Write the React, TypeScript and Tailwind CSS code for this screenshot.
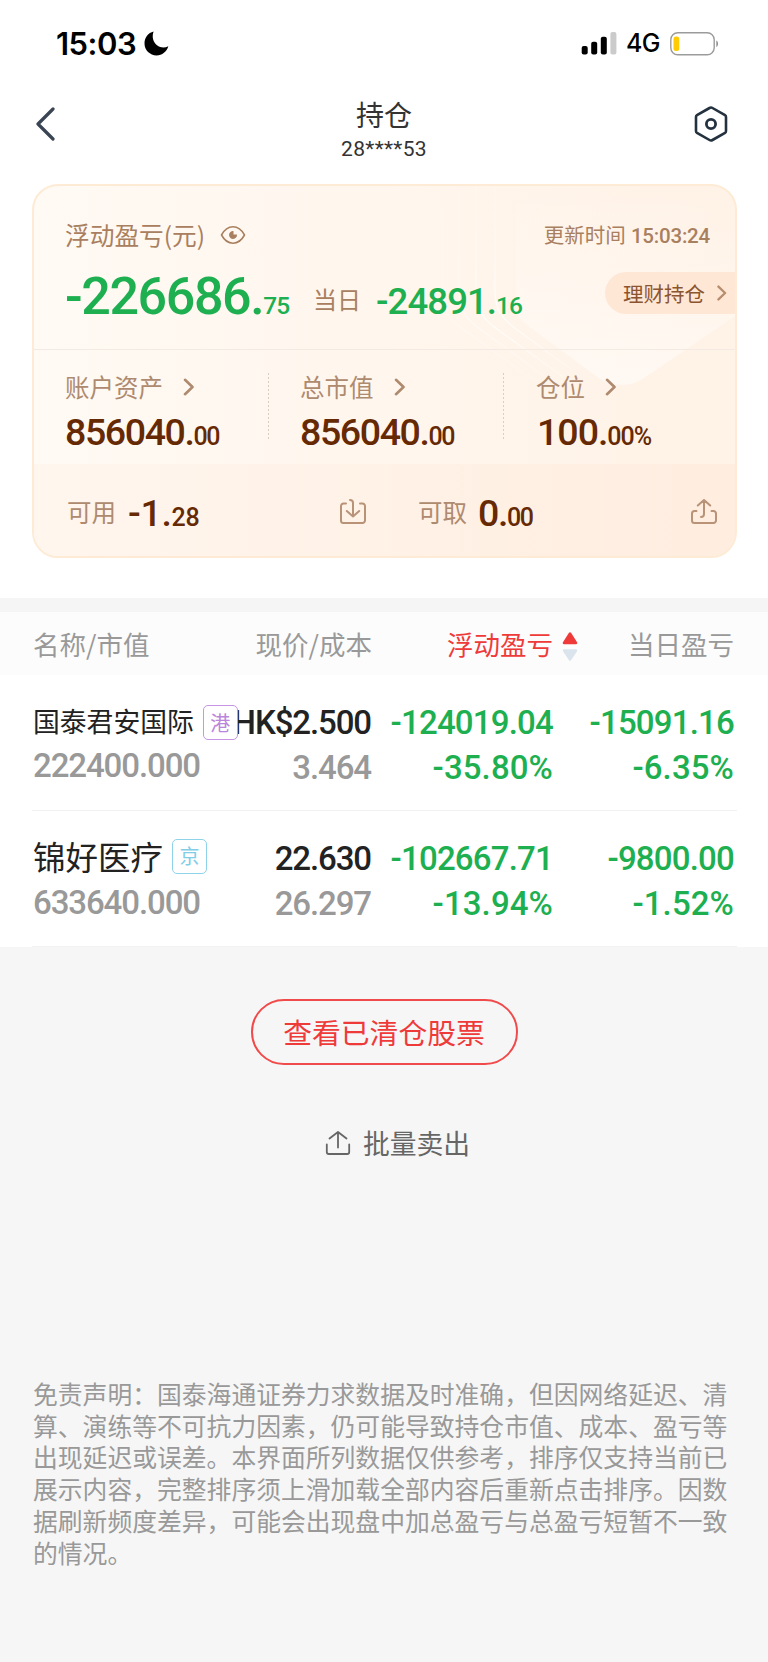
import type { ReactNode } from 'react';
import clsx from 'clsx';

const CJK = "font-['Noto_Sans_CJK_SC',sans-serif]";
const NUM = "font-['Roboto','Noto_Sans_CJK_SC',sans-serif]";

interface Holding {
  name: string;
  nameClass: string;
  market: string;
  marketClass: string;
  marketValue: string;
  marketValueClass: string;
  price: string;
  cost: string;
  profit: string;
  profitRate: string;
  daily: string;
  dailyRate: string;
}

const holdings: Holding[] = [
  {
    name: '国泰君安国际',
    nameClass: 'pb-[4px] text-[26.8px]',
    market: '港',
    marketClass: 'border-[#c795e3] text-[#bb85dc]',
    marketValue: '222400.000',
    marketValueClass: '-mt-[2px]',
    price: 'HK$2.500',
    cost: '3.464',
    profit: '-124019.04',
    profitRate: '-35.80%',
    daily: '-15091.16',
    dailyRate: '-6.35%',
  },
  {
    name: '锦好医疗',
    nameClass: 'pb-[6px] text-[32.5px]',
    market: '京',
    marketClass: 'mb-[5px] border-[#8fd3ea] text-[#82cde6]',
    marketValue: '633640.000',
    marketValueClass: '-mt-px',
    price: '22.630',
    cost: '26.297',
    profit: '-102667.71',
    profitRate: '-13.94%',
    daily: '-9800.00',
    dailyRate: '-1.52%',
  },
];

function StatusBar() {
  return (
    <div className="flex h-[87px] items-center pr-[48px] pl-[56px] text-black">
      <span className="font-['Inter',sans-serif] text-[31px] leading-none font-semibold tracking-[-0.5px]">15:03</span>
      <svg className="ml-[8px]" width="25" height="25" viewBox="0 0 25 25">
        <path d="M9.6 0.6C7.6 6 9.2 11.2 13 14.2C16.4 16.8 20.6 17 24.3 15.2C22.8 20.6 18.2 24.4 12.6 24.4C5.9 24.4 0.5 19.1 0.5 12.5C0.5 6.8 4.2 1.9 9.6 0.6Z" fill="#000" />
      </svg>
      <svg className="ml-auto" width="36" height="23" viewBox="0 0 36 23">
        <rect x="0.7" y="14" width="6" height="8.5" rx="2" fill="#000" />
        <rect x="10.2" y="9.7" width="6" height="12.8" rx="2" fill="#000" />
        <rect x="19.8" y="4.7" width="6" height="17.8" rx="2" fill="#000" />
        <rect x="29.4" y="0" width="6" height="22.5" rx="2" fill="#cbcbcb" />
      </svg>
      <span className="ml-[9px] font-['Inter',sans-serif] text-[25px] leading-none font-medium tracking-[-0.5px]">4G</span>
      <svg className="ml-[10px]" width="50" height="24" viewBox="0 0 50 24">
        <rect x="0.8" y="0.8" width="43.4" height="22" rx="7" fill="none" stroke="#9b9b9b" strokeWidth="1.4" />
        <rect x="3.5" y="4.5" width="5.8" height="14.5" rx="2.5" fill="#fecb05" />
        <path d="M46.3 8.5C48.6 9.5 48.6 14 46.3 15Z" fill="#8f8f8f" />
      </svg>
    </div>
  );
}

function Header() {
  return (
    <div className="flex h-[97px] items-start justify-between pt-px pr-[39px] pl-[35px]">
      <svg className="mt-[19px]" width="40" height="34" viewBox="0 0 40 34">
        <path d="M18 2L3 17L18 32" fill="none" stroke="#3a4553" strokeWidth="3.2" strokeLinecap="round" strokeLinejoin="round" />
      </svg>
      <div className="flex flex-col items-center text-[#333]">
        <h1 className={clsx(CJK, 'mt-[9px] text-[28px] leading-[34px] font-normal')}>持仓</h1>
        <span className={clsx(NUM, 'mt-[6px] text-[21px] leading-[24px] tracking-[0.3px]')}>28****53</span>
      </div>
      <svg className="mt-[17px]" width="36" height="38" viewBox="0 0 36 38">
        <path d="M18 2.5C18.6 2.5 19 2.7 19.5 3L32 10.2C32.8 10.7 33 11.2 33 12V26C33 26.8 32.8 27.3 32 27.8L19.5 35C18.5 35.6 17.5 35.6 16.5 35L4 27.8C3.2 27.3 3 26.8 3 26V12C3 11.2 3.2 10.7 4 10.2L16.5 3C17 2.7 17.4 2.5 18 2.5Z" fill="none" stroke="#243240" strokeWidth="2.6" />
        <circle cx="18" cy="19" r="4.6" fill="none" stroke="#243240" strokeWidth="2.8" />
      </svg>
    </div>
  );
}

function Chevron({ className }: { className?: string }) {
  return (
    <svg className={className} width="12" height="18" viewBox="0 0 12 18">
      <path d="M2 1.8L9.5 9L2 16.2" fill="none" stroke="currentColor" strokeWidth="2.6" strokeLinecap="round" strokeLinejoin="round" />
    </svg>
  );
}

interface AmountProps {
  whole: string;
  fraction: string;
  tracking?: string;
  className?: string;
}

function Amount({ whole, fraction, tracking = 'tracking-[-1.4px]', className }: AmountProps) {
  return (
    <div className={clsx(NUM, 'font-medium whitespace-nowrap text-[#652903]', tracking, className)}>
      <span className="text-[37.5px] leading-[40px]">{whole}</span>
      <span className="text-[25px] leading-[40px]">{fraction}</span>
    </div>
  );
}

function AssetCell({ label, children }: { label: string; children: ReactNode }) {
  return (
    <div className="flex flex-col gap-[8px] pt-[20px]">
      <div className="flex items-center text-[#ae8a6f]">
        <span className={clsx(CJK, 'text-[24.5px] leading-[34px]')}>{label}</span>
        <Chevron className="ml-[20px]" />
      </div>
      {children}
    </div>
  );
}

function DottedDivider() {
  return <div className="mt-[23px] h-[67px] w-px bg-[repeating-linear-gradient(to_bottom,#d9cec4_0_2px,transparent_2px_4px)]" />;
}

function AssetCard() {
  return (
    <section className="relative mr-[31px] ml-[32px] h-[374px] overflow-hidden rounded-[26px] border-2 border-[#feebd6] bg-linear-to-r from-[#fffaf4] to-[#fff2e6]">
      {/* 背景装饰 */}
      <svg className="absolute top-0 left-0" width="703" height="372" viewBox="0 0 703 372">
        <defs>
          <linearGradient id="shield" x1="0" y1="0" x2="0" y2="1">
            <stop offset="0" stopColor="#fff" stopOpacity="0" />
            <stop offset="1" stopColor="#fff" stopOpacity="0.5" />
          </linearGradient>
          <linearGradient id="trail" x1="0" y1="0" x2="0" y2="1">
            <stop offset="0" stopColor="#fff" stopOpacity="0.1" />
            <stop offset="0.7" stopColor="#fff" stopOpacity="0.9" />
            <stop offset="1" stopColor="#fff" stopOpacity="0.2" />
          </linearGradient>
        </defs>
        <path d="M482 0H703V129L613 190C598 202 577 202 562 190L494 140C486 134 482 128 482 120Z" fill="url(#shield)" />
        <g fill="none" stroke="url(#trail)" strokeWidth="1.2">
          <path d="M461 0V104C461 124 468 133 482 143L538 184" />
          <path d="M442 0V104C442 124 449 133 463 143L528 190" />
          <path d="M425 0V104C425 124 432 133 446 143L518 196" opacity="0.6" />
          <path d="M408 0V104C408 124 415 133 429 143L508 200" opacity="0.4" />
        </g>
      </svg>

      <div className="relative flex h-[370px] flex-col">
        <div className="h-[164px] border-b border-[#f3ebe3]">
          <div className="flex h-[66px] items-center pt-[32px] pr-[25px] pl-[31px] text-[#a9805f]">
            <span className={clsx(CJK, '-mt-[3px] text-[24.7px] leading-[34px]')}>浮动盈亏(元)</span>
            <svg className="ml-[15px]" width="26" height="20" viewBox="0 0 26 20">
              <path d="M1.5 10C4.5 4.5 8.5 1.8 13 1.8S21.5 4.5 24.5 10C21.5 15.5 17.5 18.2 13 18.2S4.5 15.5 1.5 10Z" fill="none" stroke="currentColor" strokeWidth="1.6" strokeLinejoin="round" />
              <path d="M13.5 6A4 4 0 1 0 17 9.5H13.5Z" fill="currentColor" />
            </svg>
            <span className={clsx(NUM, 'ml-auto pt-[2px] text-[20.5px] leading-[32px]')}>
              更新时间 <span className="font-medium tracking-[-0.2px]">15:03:24</span>
            </span>
          </div>
          <div className="flex items-start">
            <div className={clsx(NUM, 'flex items-baseline pl-[31px] font-medium whitespace-nowrap text-[#1daf50]')}>
              <span className="text-[52px] leading-[89px] tracking-[-1.4px]">-226686.</span>
              <span className="text-[24.5px] tracking-[-1px]">75</span>
              <span className={clsx(CJK, 'ml-[24px] -translate-y-[5px] text-[24px] font-normal text-[#a9805f]')}>当日</span>
              <span className="ml-[15px] text-[36.5px] tracking-[-0.9px]">-24891.</span>
              <span className="text-[24.5px] tracking-[-1px]">16</span>
            </div>
            <div className="mt-[20px] ml-auto flex h-[42px] w-[130px] items-center rounded-l-full bg-[#ffe7d6] pl-[18px] text-[#8b5530]">
              <span className={clsx(CJK, 'text-[20.5px] leading-none')}>理财持仓</span>
              <Chevron className="ml-[11px] h-[16px] text-[#b78d70]" />
            </div>
          </div>
        </div>

        <div className="grid h-[114px] grid-cols-[235px_235px_1fr]">
          <div className="flex justify-between pl-[31px]">
            <AssetCell label="账户资产">
              <Amount whole="856040." fraction="00" />
            </AssetCell>
            <DottedDivider />
          </div>
          <div className="flex justify-between pl-[31px]">
            <AssetCell label="总市值">
              <Amount whole="856040." fraction="00" />
            </AssetCell>
            <DottedDivider />
          </div>
          <div className="pl-[32px]">
            <AssetCell label="仓位">
              <Amount className="ml-px" whole="100." fraction="00%" tracking="tracking-[-1px]" />
            </AssetCell>
          </div>
        </div>

        <div className="flex grow items-center bg-linear-to-r from-[#fff6ee] to-[#ffeddf] pt-[4px] pr-[17px] pl-[33px]">
          <span className={clsx(CJK, 'text-[24.5px] leading-none text-[#ae8a6f]')}>可用</span>
          <Amount className="ml-[12px] pt-[6px]" whole="-1." fraction="28" tracking="tracking-[-0.3px]" />
          <svg className="ml-auto" width="28" height="28" viewBox="0 0 28 28" fill="none" stroke="#b99378" strokeWidth="2" strokeLinecap="round" strokeLinejoin="round">
            <path d="M7 5.5H4.5A2.5 2.5 0 0 0 2 8V22.5A2.5 2.5 0 0 0 4.5 25H23.5A2.5 2.5 0 0 0 26 22.5V8A2.5 2.5 0 0 0 23.5 5.5H21" />
            <path d="M11 2C13 2 14 3 14 5V18.5M7.8 13L14 18.5L20.2 13" />
          </svg>
          <span className={clsx(CJK, 'ml-[51px] text-[24.5px] leading-none text-[#ae8a6f]')}>可取</span>
          <Amount className="ml-[11px] w-[212px] pt-[6px]" whole="0." fraction="00" />
          <svg width="28" height="28" viewBox="0 0 28 28" fill="none" stroke="#b99378" strokeWidth="2" strokeLinecap="round" strokeLinejoin="round">
            <path d="M6.5 13H4.5A2.5 2.5 0 0 0 2 15.5V22.5A2.5 2.5 0 0 0 4.5 25H23.5A2.5 2.5 0 0 0 26 22.5V15.5A2.5 2.5 0 0 0 23.5 13H21.5" />
            <path d="M11 19C13 19 14 18 14 16V2M7.8 7.5L14 2L20.2 7.5" />
          </svg>
        </div>
      </div>
    </section>
  );
}

function TableHeader() {
  return (
    <div className={clsx(CJK, 'grid h-[63px] grid-cols-[168px_171px_181px_181px] items-center bg-[#fcfcfc] pt-[2px] pl-[33px] text-[26.5px] leading-none text-[#999]')}>
      <span>名称/市值</span>
      <span className="text-right">现价/成本</span>
      <span className="relative text-right text-[#ef3a3a]">
        浮动盈亏
        <svg className="absolute top-0 -right-[25px]" width="16" height="31" viewBox="0 0 16 31">
          <path d="M8 2.5L14 12H2Z" fill="#ef3a3a" stroke="#ef3a3a" strokeWidth="2.5" strokeLinejoin="round" />
          <path d="M8 28.5L14 19.5H2Z" fill="#dbe4ec" stroke="#dbe4ec" strokeWidth="2.5" strokeLinejoin="round" />
        </svg>
      </span>
      <span className="text-right">当日盈亏</span>
    </div>
  );
}

function HoldingRow({ holding }: { holding: Holding }) {
  return (
    <div className="mr-[31px] ml-[32px] h-[136px] border-b border-[#f2f2f2] pt-[25px]">
      <div className={clsx(NUM, 'grid grid-cols-[169px_170px_182px_181px] text-[33px] leading-[45px] font-medium tracking-[-0.8px]')}>
        <div className="relative z-10 flex h-[45px] items-center whitespace-nowrap text-[#222]">
          <span className={clsx(CJK, 'ml-px font-normal tracking-normal', holding.nameClass)}>{holding.name}</span>
          <span className={clsx(CJK, 'ml-[9px] flex size-[35px] shrink-0 items-center justify-center rounded-[5px] border-[1.5px] bg-white text-[20px] leading-none font-normal tracking-normal', holding.marketClass)}>
            {holding.market}
          </span>
        </div>
        <span className="flex justify-end tracking-[-1.1px] whitespace-nowrap text-[#222]">{holding.price}</span>
        <span className="text-right text-[#1daf50]">{holding.profit}</span>
        <span className="text-right text-[#1daf50]">{holding.daily}</span>
        <span className={clsx('ml-px tracking-[-1.1px] text-[#999]', holding.marketValueClass)}>{holding.marketValue}</span>
        <span className="text-right tracking-[-1.1px] text-[#999]">{holding.cost}</span>
        <span className="text-right tracking-[0.1px] text-[#1daf50]">{holding.profitRate}</span>
        <span className="text-right tracking-[0.1px] text-[#1daf50]">{holding.dailyRate}</span>
      </div>
    </div>
  );
}

export default function App() {
  return (
    <div className="flex min-h-[1662px] w-[768px] flex-col bg-[#f6f6f6]">
      <div className="bg-white">
        <StatusBar />
        <Header />
        <AssetCard />
        <div className="mt-[40px] h-[14px] bg-[#f5f5f5]" />
        <TableHeader />
        {holdings.map((holding) => (
          <HoldingRow key={holding.name} holding={holding} />
        ))}
      </div>

      <div className={clsx(CJK, 'flex flex-col items-center')}>
        <button className="mt-[52px] h-[66px] w-[267px] rounded-[33px] border-2 border-[#f04a4a] text-[28.8px] leading-none text-[#ef3a3a]">
          查看已清仓股票
        </button>
        <button className="mt-[59px] ml-[27px] flex h-[38px] items-center text-[26.8px] leading-none text-[#666]">
          <svg className="mr-[12px]" width="26" height="26" viewBox="0 0 26 26" fill="none" stroke="currentColor" strokeWidth="1.8" strokeLinecap="round" strokeLinejoin="round">
            <path d="M1.8 14.5V22A2 2 0 0 0 3.8 24H22.2A2 2 0 0 0 24.2 22V14.5" />
            <path d="M13 17.5V2M4.5 8.5L13 2L21.5 8.5" />
          </svg>
          批量卖出
        </button>
      </div>

      <p className={clsx(CJK, 'mt-[216px] ml-[33px] w-[700px] text-[24.8px] leading-[31.7px] text-[#999]')}>
        免责声明：国泰海通证券力求数据及时准确，但因网络延迟、清算、演练等不可抗力因素，仍可能导致持仓市值、成本、盈亏等出现延迟或误差。本界面所列数据仅供参考，排序仅支持当前已展示内容，完整排序须上滑加载全部内容后重新点击排序。因数据刷新频度差异，可能会出现盘中加总盈亏与总盈亏短暂不一致的情况。
      </p>
    </div>
  );
}
